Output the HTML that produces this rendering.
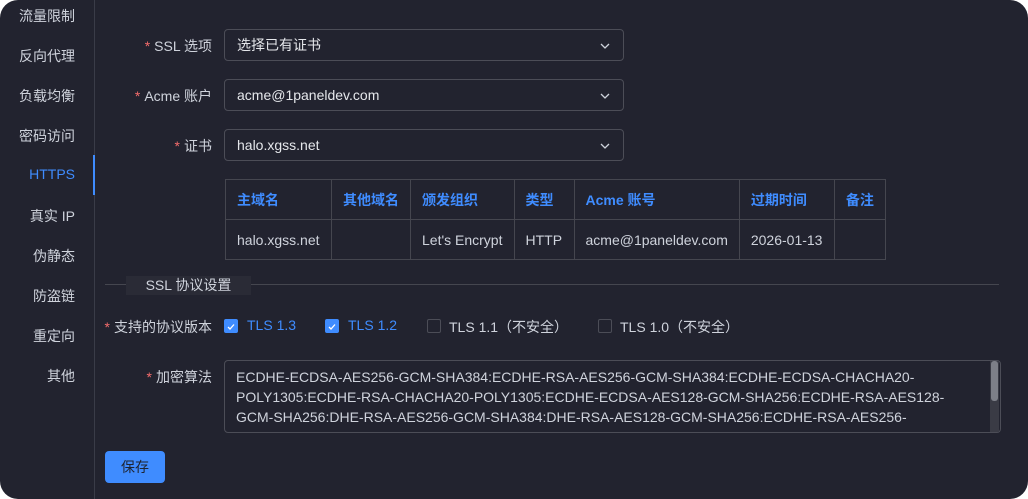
<!DOCTYPE html>
<html><head><meta charset="utf-8"><style>
*{box-sizing:border-box;margin:0;padding:0}
body{width:1028px;height:499px;background:#fff;font-family:"Liberation Sans","Noto Sans CJK SC",sans-serif;font-size:14px;color:#cfd3dc;overflow:hidden}
.win{position:absolute;left:0;top:0;width:1028px;height:499px;background:#22232f;border-radius:18px;overflow:hidden}
.side{position:absolute;left:0;top:0;width:95px;height:499px;border-right:1px solid #3a3c48}
.side div{position:absolute;right:19px;font-size:14px;color:#cfd3dc}
.side .act{color:#3f8cff}
.ind{position:absolute;left:93px;top:155px;width:2px;height:40px;background:#3f8cff}
.lab{position:absolute;right:816px;font-size:14px;color:#cfd3dc;white-space:nowrap}
.lab b{color:#f56c6c;font-weight:normal;margin-right:4px}
.sel{position:absolute;left:224px;width:400px;height:32px;border:1px solid #4c4d57;border-radius:4px;padding-left:12px;line-height:30px;color:#e5e7eb}
.sel svg{position:absolute;right:12px;top:10px}
table{position:absolute;left:225px;top:179px;border-collapse:collapse}
td{border:1px solid #45464f;height:40px;padding:0 11px;white-space:nowrap;color:#cfd3dc}
tr:first-child td{color:#3f8cff;font-weight:bold}
.cb{position:absolute;top:319px;width:14px;height:14px;border:1px solid #4c4d57;border-radius:2px}
.cb.on{background:#3f8cff;border-color:#3f8cff}
.ct{position:absolute;top:317px;font-size:14px}
.ta{position:absolute;left:224px;top:360px;width:777px;height:73px;border:1px solid #4c4d57;border-radius:4px;padding:6px 11px;line-height:20px;color:#cfd3dc;overflow:hidden;font-size:14px}
.btn{position:absolute;left:105px;top:451px;width:60px;height:32px;background:#3f8cff;border-radius:4px;color:#1e2430;text-align:center;line-height:32px}
</style></head><body><div class="win">
<div class="side">
<div style="top:6px">流量限制</div>
<div style="top:46px">反向代理</div>
<div style="top:86px">负载均衡</div>
<div style="top:126px">密码访问</div>
<div class="act" style="top:166px">HTTPS</div>
<div style="top:206px">真实 IP</div>
<div style="top:246px">伪静态</div>
<div style="top:286px">防盗链</div>
<div style="top:326px">重定向</div>
<div style="top:366px">其他</div>
</div>
<div class="ind"></div>
<div class="lab" style="top:36px"><b>*</b>SSL 选项</div>
<div class="lab" style="top:86px"><b>*</b>Acme 账户</div>
<div class="lab" style="top:136px"><b>*</b>证书</div>
<div class="sel" style="top:29px">选择已有证书<svg width="12" height="12" viewBox="0 0 12 12"><path d="M2 4l4 4 4-4" stroke="#cfd3dc" fill="none" stroke-width="1.3"/></svg></div>
<div class="sel" style="top:79px">acme@1paneldev.com<svg width="12" height="12" viewBox="0 0 12 12"><path d="M2 4l4 4 4-4" stroke="#cfd3dc" fill="none" stroke-width="1.3"/></svg></div>
<div class="sel" style="top:129px">halo.xgss.net<svg width="12" height="12" viewBox="0 0 12 12"><path d="M2 4l4 4 4-4" stroke="#cfd3dc" fill="none" stroke-width="1.3"/></svg></div>
<table>
<tr><td style="width:106px">主域名</td><td style="width:79px">其他域名</td><td style="width:103px">颁发组织</td><td style="width:60px">类型</td><td style="width:165px">Acme 账号</td><td style="width:95px">过期时间</td><td style="width:50px">备注</td></tr>
<tr><td>halo.xgss.net</td><td></td><td>Let's Encrypt</td><td>HTTP</td><td>acme@1paneldev.com</td><td>2026-01-13</td><td></td></tr>
</table>
<div style="position:absolute;left:105px;top:284px;width:894px;height:1px;background:#45464f"></div>
<div style="position:absolute;left:126px;top:276px;width:125px;height:19px;background:#2a2b36;text-align:center;line-height:19px;color:#cfd3dc">SSL 协议设置</div>
<div class="lab" style="top:317px"><b>*</b>支持的协议版本</div>
<div class="cb on" style="left:224px"><svg width="12" height="12" viewBox="0 0 12 12"><path d="M3 6l2 2 4-4.5" stroke="#fff" fill="none" stroke-width="1.3"/></svg></div>
<div class="ct" style="left:247px;color:#3f8cff">TLS 1.3</div>
<div class="cb on" style="left:325px"><svg width="12" height="12" viewBox="0 0 12 12"><path d="M3 6l2 2 4-4.5" stroke="#fff" fill="none" stroke-width="1.3"/></svg></div>
<div class="ct" style="left:348px;color:#3f8cff">TLS 1.2</div>
<div class="cb" style="left:427px"></div>
<div class="ct" style="left:449px">TLS 1.1（不安全）</div>
<div class="cb" style="left:598px"></div>
<div class="ct" style="left:620px">TLS 1.0（不安全）</div>
<div class="lab" style="top:367px"><b>*</b>加密算法</div>
<div class="ta">ECDHE-ECDSA-AES256-GCM-SHA384:ECDHE-RSA-AES256-GCM-SHA384:ECDHE-ECDSA-CHACHA20-<br>POLY1305:ECDHE-RSA-CHACHA20-POLY1305:ECDHE-ECDSA-AES128-GCM-SHA256:ECDHE-RSA-AES128-<br>GCM-SHA256:DHE-RSA-AES256-GCM-SHA384:DHE-RSA-AES128-GCM-SHA256:ECDHE-RSA-AES256-</div>
<div style="position:absolute;left:990px;top:361px;width:9px;height:71px;background:#3a3b45"></div>
<div style="position:absolute;left:991px;top:361px;width:7px;height:40px;background:#7d7f88;border-radius:3px"></div>
<div class="btn">保存</div>
</div></body></html>
